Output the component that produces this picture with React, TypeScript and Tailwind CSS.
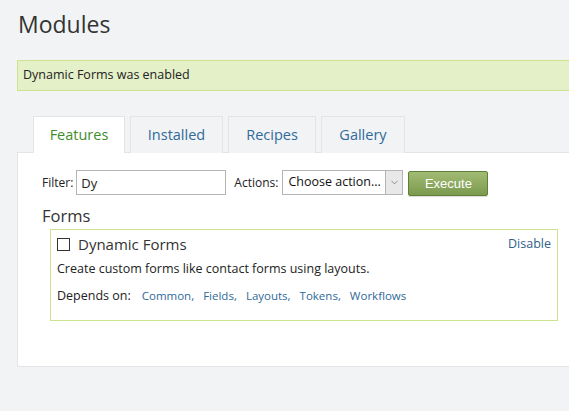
import { ChevronDown } from 'lucide-react';

const tabs = [
  { label: 'Features', w: 'w-[92px]', active: true },
  { label: 'Installed', w: 'w-[93px]' },
  { label: 'Recipes', w: 'w-[88px]' },
  { label: 'Gallery', w: 'w-[84px]' },
];

const deps = ['Common', 'Fields', 'Layouts', 'Tokens', 'Workflows'];

export default function App() {
  return (
    <div className="min-h-[411px] w-full overflow-hidden bg-[#f2f3f5] font-['Open_Sans',sans-serif] text-[#333]">
      <div className="pl-[17px]">
        {/* heading */}
        <h1 className="pl-[1px] pt-[9px] text-[23px] leading-[30px] text-[#333]">Modules</h1>

        {/* message */}
        <div className="mt-[21px] flex h-[31px] items-center border border-r-0 border-[#cfe38e] bg-[#e4f0c8] pl-[5px] text-[12.5px] text-[#222]">
          Dynamic Forms was enabled
        </div>

        {/* tabs */}
        <div className="mt-[25px] flex gap-[5px] pl-[16px]">
          {tabs.map((t) => (
            <div
              key={t.label}
              className={`${t.w} relative flex h-[37px] items-center justify-center border border-b-0 border-[#e2e4e7] text-[14.5px] ${
                t.active ? 'z-10 bg-white text-[#3e8d2c]' : 'bg-[#f2f3f5] text-[#2f6a9a]'
              }`}
            >
              {t.label}
            </div>
          ))}
        </div>

        {/* panel */}
        <div className="-mt-px h-[215px] border border-r-0 border-[#e2e4e7] bg-white pl-[24px] pt-[16px]">
          <div className="flex items-center text-[12px] text-[#222]">
            <span>Filter:</span>
            <input
              defaultValue="Dy"
              className="ml-[3px] h-[25px] w-[150px] border border-[#b4b4b4] px-[4px] text-[13px] text-[#222] outline-none"
            />
            <span className="ml-[8px]">Actions:</span>
            <div className="ml-[4px] flex h-[25px] w-[121px] items-center border border-[#b4b4b4] bg-white">
              <span className="flex-1 whitespace-nowrap pl-[5px] text-[12.5px] text-[#111]">Choose action...</span>
              <div className="flex h-full w-[17px] shrink-0 items-center justify-center border-l border-[#b4b4b4] bg-[#e8e8e8]">
                <ChevronDown size={11} strokeWidth={1.5} className="text-[#666]" />
              </div>
            </div>
            <button className="ml-[5px] mt-[2px] h-[25px] w-[80px] rounded-[2px] border border-[#5f803a] bg-gradient-to-b from-[#a2bb73] to-[#7b9a4e] font-['Liberation_Sans',sans-serif] text-[13px] text-white shadow-[0_1px_1px_rgba(0,0,0,0.15)]">
              Execute
            </button>
          </div>

          <h2 className="mt-[9px] text-[16.5px] leading-[22px] text-[#333]">Forms</h2>

          <div className="ml-[8px] mt-[2px] h-[92px] w-[508px] border-[1.5px] border-[#cde28c] px-[6px] pt-[3px]">
            <div className="flex items-center justify-between">
              <div className="flex items-center">
                <span className="h-[13px] w-[13px] border border-[#333] bg-white" />
                <span className="ml-[8px] text-[15px] leading-[22px] text-[#333]">Dynamic Forms</span>
              </div>
              <a className="text-[12.5px] text-[#2f5f8a]">Disable</a>
            </div>
            <p className="mt-[5px] text-[12.5px] leading-[18px] text-[#222]">
              Create custom forms like contact forms using layouts.
            </p>
            <div className="mt-[9px] flex items-center text-[12.5px] leading-[18px] text-[#222]">
              <span>Depends on:</span>
              <span className="ml-[11px] flex gap-[9px] text-[11.5px] text-[#2f6a9a]">
                {deps.map((d, i) => (
                  <a key={d}>
                    {d}
                    {i < deps.length - 1 ? ',' : ''}
                  </a>
                ))}
              </span>
            </div>
          </div>
        </div>
      </div>
    </div>
  );
}
